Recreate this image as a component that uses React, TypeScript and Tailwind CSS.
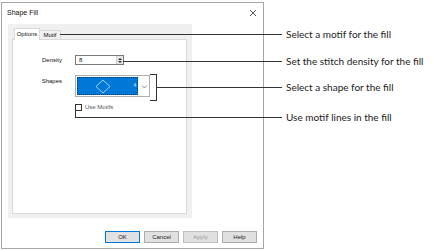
import React from "react";

const ui = { fontFamily: '"Liberation Sans", Arial, sans-serif' };
const note = { fontFamily: 'Lato, "Liberation Sans", sans-serif' };

const callouts = [
  { text: "Select a motif for the fill", y: 34 },
  { text: "Set the stitch density for the fill", y: 61 },
  { text: "Select a shape for the fill", y: 87 },
  { text: "Use motif lines in the fill", y: 117 },
];

function DialogButton({ label, primary, disabled }: { label: string; primary?: boolean; disabled?: boolean }) {
  return (
    <div
      className={`w-[35px] h-[12px] flex items-center justify-center text-[6px] border ${
        primary ? "border-[#0078d7] bg-[#e1e1e1]" : "border-[#adadad] bg-[#e1e1e1]"
      } ${disabled ? "text-[#a0a0a0] bg-[#cccccc] border-[#bfbfbf]" : "text-[#222]"}`}
    >
      {label}
    </div>
  );
}

export default function App() {
  return (
    <div className="relative w-[445px] h-[251px] bg-white overflow-hidden" style={ui}>
      {/* Dialog */}
      <div className="absolute left-[1px] top-[2px] w-[263px] h-[247px] border border-[#a6a6a6] bg-white flex flex-col">
        <div className="h-[20px] flex items-center justify-between pl-[5px] pr-[5px]">
          <span className="text-[7px] text-[#111]">Shape Fill</span>
          <svg width="8" height="8" viewBox="0 0 8 8" className="mr-[1px]">
            <path d="M1 1L7 7M7 1L1 7" stroke="#333" strokeWidth="0.8" />
          </svg>
        </div>
        <div className="ml-[6px] mt-[1px] w-[184px] h-[194px] bg-[#f0f0f0] flex flex-col px-[4px] pt-[4px]">
          <div className="flex items-end h-[12px] pl-[2px]">
            <div className="h-[12px] w-[26px] bg-white border border-b-0 border-[#d9d9d9] text-[6px] flex items-center justify-center text-[#111] relative z-10">
              Options
            </div>
            <div className="h-[10px] w-[21px] bg-[#f0f0f0] border border-l-0 border-b-0 border-[#d9d9d9] text-[6px] flex items-center justify-center text-[#111]">
              Motif
            </div>
          </div>
          <div className="w-[175px] h-[175px] -mt-[1px] bg-white border border-[#d9d9d9] relative">
            <div className="flex items-center mt-[15px]">
              <span className="w-[49px] text-right text-[6px] text-[#111]">Density</span>
              <div className="ml-[13px] w-[49px] h-[10px] border border-[#7a7a7a] flex items-center">
                <span className="flex-1 text-[6px] pl-[3px] text-[#111]">8</span>
                <div className="w-[7px] h-[8px] bg-[#e5e5e5] border-l border-[#cfcfcf] flex flex-col items-center justify-center gap-[1px]">
                  <svg width="4" height="2" viewBox="0 0 4 2"><path d="M0 2L2 0L4 2Z" fill="#333" /></svg>
                  <svg width="4" height="2" viewBox="0 0 4 2"><path d="M0 0L2 2L4 0Z" fill="#333" /></svg>
                </div>
              </div>
            </div>
            <div className="flex items-start mt-[10px]">
              <span className="w-[49px] text-right text-[6px] text-[#111] mt-[2px]">Shapes</span>
              <div className="ml-[13px] w-[75px] h-[22px] border border-[#adadad] flex items-center p-[1px]">
                <div className="w-[63px] h-[18px] bg-[#0078d7] outline outline-1 outline-dotted outline-[#003a6a] -outline-offset-1 flex items-center relative">
                  <svg width="16" height="15" viewBox="0 0 16 15" className="absolute left-[18px] top-[1.5px]">
                    <path d="M8 1L15 7.5L8 14L1 7.5Z" fill="none" stroke="#cfe6fb" strokeWidth="0.8" />
                  </svg>
                  <span className="absolute right-[2px] top-[5px] text-[5px] text-[#cfe6fb]">4</span>
                </div>
                <svg width="7" height="5" viewBox="0 0 7 5" className="ml-[3px]">
                  <path d="M1 1.5L3.5 4L6 1.5" fill="none" stroke="#555" strokeWidth="0.7" />
                </svg>
              </div>
            </div>
            <div className="flex items-center mt-[6px] ml-[62px]">
              <div className="w-[7px] h-[7px] border border-[#333] bg-white" />
              <span className="ml-[3px] text-[6px] text-[#555]">Use Motifs</span>
            </div>
          </div>
        </div>
        <div className="flex justify-end gap-[4px] mt-[13px] pr-[6px]">
          <DialogButton label="OK" primary />
          <DialogButton label="Cancel" />
          <DialogButton label="Apply" disabled />
          <DialogButton label="Help" />
        </div>
      </div>

      {/* Callout lines */}
      <div className="absolute left-[60px] top-[34px] w-[222px] h-px bg-[#333]" />
      <div className="absolute left-[123px] top-[61px] w-[159px] h-px bg-[#333]" />
      <div className="absolute left-[150px] top-[74px] w-[7px] h-[27px] border border-l-0 border-[#333]" />
      <div className="absolute left-[156px] top-[87px] w-[126px] h-px bg-[#333]" />
      <div className="absolute left-[75px] top-[110px] w-[207px] h-[8px] border-l border-b border-[#333]" />

      {/* Callout labels */}
      {callouts.map((c) => (
        <div
          key={c.text}
          className="absolute left-[286px] text-[10px] leading-[12px] text-[#222]"
          style={{ ...note, top: c.y - 6 }}
        >
          {c.text}
        </div>
      ))}
    </div>
  );
}
